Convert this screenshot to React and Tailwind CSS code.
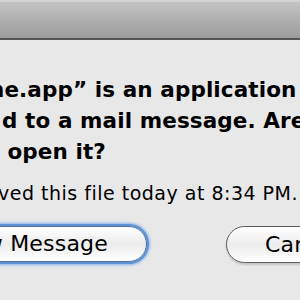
export default function App() {
  return (
    <div className="w-[300px] h-[300px] overflow-hidden bg-[#e8e8e8] text-black font-['DejaVu_Sans',sans-serif]">
      {/* Title bar */}
      <div className="h-[40px] border-t-[2px] border-[#d2d2d2] bg-gradient-to-b from-[#c3c3c3] to-[#9b9b9b] border-b-[2px] border-b-[#555555]" />

      {/* Message */}
      <div className="mt-[34px] text-[21.5px] font-bold leading-[31px] tracking-[0.1px] whitespace-nowrap">
        <div className="ml-[-11px]">ne.app” is an application</div>
        <div className="ml-[2px]">d to a mail message. Are you</div>
        <div className="ml-[-15px]">o open it?</div>
      </div>

      <div className="mt-[14px] text-[19px] leading-[24px] tracking-[0.5px] whitespace-nowrap ml-[-2px]">
        ved this file today at 8:34 PM.
      </div>

      {/* Buttons */}
      <div className="mt-[21px] flex whitespace-nowrap">
        <div className="ml-[-70px] w-[217px] h-[36px] shrink-0 rounded-full border border-[#4a6f9c] bg-gradient-to-b from-white via-[#ececec] to-white shadow-[0_0_0_2px_#5d92d6,0_0_3px_3px_#8db4e8] flex items-center justify-end pr-[38px] text-[22px] tracking-[0.2px] leading-none">
          Show Message
        </div>
        <div className="ml-[79px] w-[120px] h-[37px] shrink-0 rounded-full border border-[#5c5c5c] bg-gradient-to-b from-white via-[#ececec] to-white shadow-[0_2px_2px_rgba(0,0,0,0.15)] flex items-center pl-[38px] text-[22px] tracking-[0.2px] leading-none">
          Cancel
        </div>
      </div>
    </div>
  )
}
